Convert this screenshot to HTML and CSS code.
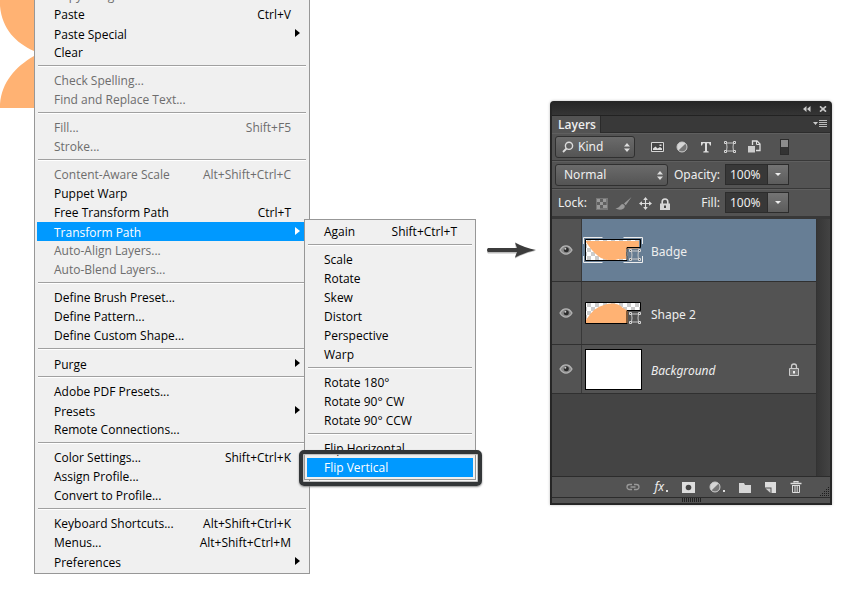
FILE: index.html
```
<!DOCTYPE html>
<html lang="en">
<head>
<meta charset="utf-8">
<title>Transform Path</title>
<link rel="stylesheet" href="styles.css">
</head>
<body>
<svg class="defs" width="0" height="0" aria-hidden="true">
  <defs>
    <pattern id="checks" width="8" height="8" patternUnits="userSpaceOnUse">
      <rect width="8" height="8" fill="#fff"/><path d="M0 0h4v4H0zM4 4h4v4H4z" fill="#ccc"/>
    </pattern>
    <symbol id="eye" viewBox="0 0 14 10">
      <path d="M1 5C3 1.6 5 .9 7 .9S11 1.600 13 5C11 8.400 9 9.100 7 9.100S3 8.400 1 5z" fill="#888" stroke="#b4b4b4" stroke-width="1.300"/>
      <circle cx="7.300" cy="4.700" r="2.500" fill="#2c2c2c"/><circle cx="6.300" cy="3.700" r="1" fill="#ccc"/>
    </symbol>
    <symbol id="vector" viewBox="0 0 12 12">
      <path d="M2 2h8M2 10h8M2.500 2Q3.500 6 2.500 10M9.500 2Q8.500 6 9.500 10" fill="none" stroke="#c8c8c8"/>
      <path d="M.5.5h2v2h-2zM9.500.5h2v2h-2zM.5 9.500h2v2h-2zM9.500 9.500h2v2h-2z" fill="#535353" stroke="#d6d6d6"/>
    </symbol>
    <symbol id="half" viewBox="0 0 12 12">
      <circle cx="6" cy="6" r="5" fill="#d6d6d6"/><path d="M9.600 2.400A5 5 0 0 1 2.400 9.600z" fill="#777"/><circle cx="6" cy="6" r="5" fill="none" stroke="#c8c8c8"/>
    </symbol>
    <symbol id="lock" viewBox="0 0 12 12">
      <path d="M3.200 6V3.800a2.800 2.800 0 0 1 5.600 0V6" fill="none" stroke="#ddd" stroke-width="1.600"/>
      <path d="M1 5.500h10V12H1z" fill="#d6d6d6"/><path d="M5 7.500h2V10H5z" fill="#444"/>
    </symbol>
  </defs>
</svg>
<main class="stage">
  <svg class="art" viewBox="0 0 34 108" aria-hidden="true">
    <path d="M0 0H34V51C16 43 2 29 0 6zM34 56V108H0V104C2 82 15 67 34 56z" fill="#ffb273"/>
  </svg>

  <div class="menu" role="menu" aria-label="Edit">
    <button class="item" disabled>Copy Merged</button>
    <button class="item">Paste <kbd>Ctrl+V</kbd></button>
    <button class="item more">Paste Special</button>
    <button class="item">Clear</button>
    <hr>
    <button class="item" disabled>Check Spelling...</button>
    <button class="item" disabled>Find and Replace Text...</button>
    <hr>
    <button class="item" disabled>Fill... <kbd>Shift+F5</kbd></button>
    <button class="item" disabled>Stroke...</button>
    <hr>
    <button class="item" disabled>Content-Aware Scale <kbd>Alt+Shift+Ctrl+C</kbd></button>
    <button class="item">Puppet Warp</button>
    <button class="item">Free Transform Path <kbd>Ctrl+T</kbd></button>
    <div class="parent">
      <button class="item more active">Transform Path</button>
      <div class="menu submenu" role="menu" aria-label="Transform Path">
        <button class="item">Again <kbd>Shift+Ctrl+T</kbd></button>
        <hr>
        <button class="item">Scale</button>
        <button class="item">Rotate</button>
        <button class="item">Skew</button>
        <button class="item">Distort</button>
        <button class="item">Perspective</button>
        <button class="item">Warp</button>
        <hr>
        <button class="item">Rotate 180°</button>
        <button class="item">Rotate 90° CW</button>
        <button class="item">Rotate 90° CCW</button>
        <hr>
        <button class="item">Flip Horizontal</button>
        <div class="parent">
          <button class="item active">Flip Vertical</button>
          <span class="frame"></span>
        </div>
      </div>
    </div>
    <button class="item" disabled>Auto-Align Layers...</button>
    <button class="item" disabled>Auto-Blend Layers...</button>
    <hr>
    <button class="item">Define Brush Preset...</button>
    <button class="item">Define Pattern...</button>
    <button class="item">Define Custom Shape...</button>
    <hr>
    <button class="item more">Purge</button>
    <hr>
    <button class="item">Adobe PDF Presets...</button>
    <button class="item more">Presets</button>
    <button class="item">Remote Connections...</button>
    <hr>
    <button class="item">Color Settings... <kbd>Shift+Ctrl+K</kbd></button>
    <button class="item">Assign Profile...</button>
    <button class="item">Convert to Profile...</button>
    <hr>
    <button class="item">Keyboard Shortcuts... <kbd>Alt+Shift+Ctrl+K</kbd></button>
    <button class="item">Menus... <kbd>Alt+Shift+Ctrl+M</kbd></button>
    <button class="item more">Preferences</button>
  </div>

  <div class="pointer">
    <svg width="52" height="20" viewBox="0 0 52 20" aria-hidden="true">
      <path d="M3 9H31L30 3.500Q40 9 50 11Q40 13 30 18.500L31 13.500H3Q1 11 3 9z" fill="#bbb"/>
      <path d="M3 8H32L30 2.500Q40 8 51 10Q40 12 30 17.500L32 12H3Q1 10 3 8z" fill="#3c3c3c"/>
    </svg>
  </div>

  <section class="panel" aria-label="Layers">
    <header class="titlebar">
      <svg width="8" height="6" viewBox="0 0 8 6"><path d="M3.500 0v6L0 3zM7.500 0v6L4 3z" fill="#ccc"/></svg>
      <svg width="8" height="6" viewBox="0 0 8 6"><path d="M1 .3L7 5.700M7 .3L1 5.700" stroke="#c8c8c8" stroke-width="1.600"/></svg>
    </header>
    <div class="tabs">
      <button class="tab">Layers</button>
      <svg width="15" height="8" viewBox="0 0 15 8"><path d="M0 2h5L2.500 5z" fill="#ccc"/><path d="M6 .5h8M6 2.500h8M6 4.500h8M6 6.500h8" stroke="#bbb"/></svg>
    </div>

    <div class="row">
      <div class="pick kind">
        <svg class="glass" width="12" height="12" viewBox="0 0 12 12"><circle cx="7" cy="4.800" r="3.600" fill="none" stroke="#ddd" stroke-width="1.400"/><path d="M4.500 7.500L1 11" stroke="#ddd" stroke-width="1.800"/></svg>
        <select aria-label="Filter type"><option>Kind</option></select>
        <svg class="updown" width="6" height="9" viewBox="0 0 6 9"><path d="M0 3.500L3 0L6 3.500zM0 5.500h6L3 9z" fill="#ddd"/></svg>
      </div>
      <div class="filters">
        <svg width="13" height="12" viewBox="0 0 13 12"><path d="M.5 1.500h12v9H.5z" fill="#444" stroke="#d6d6d6"/><path d="M2 9V7.500L4.500 5.500l2 2L9 6l2 1.500V9z" fill="#ddd"/><path d="M8.500 3.500h2V5h-2z" fill="#ddd"/></svg>
        <svg width="12" height="12"><use href="#half"/></svg>
        <svg width="12" height="12" viewBox="0 0 12 12"><path d="M1 1h10v3.500h-1L9 2.300H7V10l1.700.5v1H3.300v-1L5 10V2.300H3L2 4.500H1z" fill="#ddd"/></svg>
        <svg width="12" height="12"><use href="#vector"/></svg>
        <svg width="13" height="13" viewBox="0 0 13 13"><path d="M4.500 5V1h4.500l3 3v6.500H8" fill="none" stroke="#ddd" stroke-width="1.300"/><path d="M8.500 1v3.500H12" fill="none" stroke="#ddd"/><path d="M0 6h7v6.500H0z" fill="#ccc"/></svg>
      </div>
      <button class="switch" aria-label="Filtering on"></button>
    </div>

    <div class="row">
      <div class="pick blend">
        <select aria-label="Blend mode"><option>Normal</option></select>
        <svg class="updown" width="6" height="9" viewBox="0 0 6 9"><path d="M0 3.500L3 0L6 3.500zM0 5.500h6L3 9z" fill="#ddd"/></svg>
      </div>
      <div class="amount">
        <label for="opacity">Opacity:</label>
        <input id="opacity" value="100%"><button class="drop" aria-label="Opacity slider"></button>
      </div>
    </div>

    <div class="row">
      <span class="lock-label">Lock:</span>
      <div class="locks">
        <svg width="12" height="12" viewBox="0 0 12 12"><path d="M0 0h12v12H0z" fill="#777"/><path d="M1 1h3v3H1zM7 1h3v3H7zM4 4h3v3H4zM1 7h3v4H1zM7 7h4v3H7z" fill="#999"/><path d="M4 1h3v3H4zM1 4h3v3H1zM7 4h3v3H7zM4 7h3v3H4z" fill="#606060"/></svg>
        <svg width="17" height="13" viewBox="0 0 17 13"><path d="M16.500 0L9 6.500l1.800 1.700zM8 7C5 7 5.500 10.500.5 11.500C4 13.500 10 13 9.800 8.800z" fill="#999"/></svg>
        <svg width="13" height="13" viewBox="0 0 14 14"><path d="M7 2v10M2 7h10" stroke="#ddd" stroke-width="1.200"/><path d="M7 0l2.500 3.200H4.500zM7 14l2.500-3.200H4.500zM0 7l3.200-2.500v5zM14 7l-3.200-2.500v5z" fill="#ddd"/></svg>
        <svg width="12" height="12"><use href="#lock"/></svg>
      </div>
      <div class="amount">
        <label for="fill">Fill:</label>
        <input id="fill" value="100%"><button class="drop" aria-label="Fill slider"></button>
      </div>
    </div>

    <div class="list-area">
      <ul class="layers">
        <li class="layer selected">
          <button class="eye" aria-label="Hide Badge"><svg width="14" height="10"><use href="#eye"/></svg></button>
          <svg class="thumb" width="60" height="28" viewBox="0 0 60 28">
            <path d="M2 4h54v20H2z" fill="url(#checks)"/>
            <path d="M3 5H56V13H43V23H36Q27 26 18 22Q10 17 3 6z" fill="#ffb273"/>
            <path d="M2.500 3.500h55v8H44v13H2.500z" fill="none" stroke="#000"/>
            <path d="M.5 8V1.500h19M40.500 1.500h19V8M.5 20v6.500h19M40.500 26.500h19V20" fill="none" stroke="#eee"/>
            <path d="M45 12.500h13V25H45z" fill="#687d92"/>
            <use href="#vector" x="46" y="13" width="12" height="12"/>
          </svg>
          <span class="name">Badge</span>
        </li>
        <li class="layer">
          <button class="eye" aria-label="Hide Shape 2"><svg width="14" height="10"><use href="#eye"/></svg></button>
          <svg class="thumb" width="60" height="28" viewBox="0 0 60 28">
            <path d="M2 4h55v20H2z" fill="url(#checks)"/>
            <path d="M3 24V21Q11 8 21 6Q33 2 40 9L45 12V24z" fill="#ffb273"/>
            <path d="M45 12h14v15H45z" fill="#535353"/>
            <path d="M2.500 3.500h55v8H44v13H2.500z" fill="none" stroke="#000"/>
            <use href="#vector" x="46" y="13" width="12" height="12"/>
          </svg>
          <span class="name">Shape 2</span>
        </li>
        <li class="layer base">
          <button class="eye" aria-label="Hide Background"><svg width="14" height="10"><use href="#eye"/></svg></button>
          <span class="thumb blank"></span>
          <span class="name">Background</span>
          <svg class="locked" width="12" height="13" viewBox="0 0 12 13"><path d="M3.500 6V3.500a2.500 2.500 0 0 1 5 0V6" fill="none" stroke="#ccc" stroke-width="1.300"/><path d="M1.500 5.500h9v7h-9z" fill="#777" stroke="#ccc"/><path d="M5 8h2v2.500H5z" fill="#eee"/></svg>
        </li>
      </ul>
      <div class="scroll"></div>
    </div>

    <footer class="tools">
      <svg width="14" height="8" viewBox="0 0 14 8"><path d="M6 6.500H3.500a2.500 2.500 0 0 1 0-5H6M8 1.500h2.500a2.500 2.500 0 0 1 0 5H8M4.500 4h5" fill="none" stroke="#999" stroke-width="1.300"/></svg>
      <button class="fx">fx<i></i></button>
      <svg width="13" height="11" viewBox="0 0 13 11"><path d="M0 0h13v11H0z" fill="#ddd"/><circle cx="6.500" cy="5.500" r="2.800" fill="#444"/></svg>
      <button class="fx" aria-label="Adjustment layer"><svg width="12" height="12"><use href="#half"/></svg><i></i></button>
      <svg width="12" height="11" viewBox="0 0 12 11"><path d="M0 1h5l1 2h6v8H0z" fill="#d6d6d6"/></svg>
      <svg width="11" height="11" viewBox="0 0 11 11"><path d="M0 0h11v11H6.500V5.500H0z" fill="#ddd"/><path d="M.5 6.500H5.500V11z" fill="#ccc"/></svg>
      <svg width="12" height="12" viewBox="0 0 12 12"><path d="M4 1.500V.6h4v.9M.5 2.500h11" fill="none" stroke="#ddd" stroke-width="1.300"/><path d="M2 4.500h8M2.500 4.500V11.500h7V4.500M5 5v6M7.200 5v6" fill="none" stroke="#ddd"/></svg>
      <svg class="corner" width="10" height="10" viewBox="0 0 10 10"><path d="M8 0h1v1H8zM6 2h1v1H6zM8 2h1v1H8zM4 4h1v1H4zM6 4h1v1H6zM8 4h1v1H8zM2 6h1v1H2zM4 6h1v1H4zM6 6h1v1H6zM8 6h1v1H8zM0 8h1v1H0zM2 8h1v1H2zM4 8h1v1H4zM6 8h1v1H6zM8 8h1v1H8z" fill="#1c1c1c"/></svg>
    </footer>
    <div class="grip"><span></span></div>
  </section>
</main>
</body>
</html>
```

FILE: styles.css
```
* { box-sizing: border-box; }
html, body { margin: 0; background: #fff; }
body { font-family: "Open Sans", sans-serif; font-size: 12px; overflow: hidden; }
button, input, select { font: inherit; color: inherit; margin: 0; padding: 0; border: 0; background: none; border-radius: 0; }
svg { display: block; flex: none; }
.defs { position: absolute; }

.stage { display: flex; align-items: flex-start; padding-right: 18px; }
.art { width: 34px; }

/* menus */
.menu { flex: none; width: 276px; margin-top: -17px; padding: 2px; background: #f0f0f0; border: 1px solid #979797; color: #000; }
.item { display: flex; justify-content: space-between; align-items: center; width: 100%; height: 19px; padding: 0 16px 0 17px; line-height: 18px; text-align: left; white-space: nowrap; }
.item:disabled { color: #6d6d6d; }
.item kbd { font: inherit; }
.item.more { padding-right: 7px; padding-top: 2px; }
.item.more::after { content: ""; border: 4px solid transparent; border-left: 5px solid #000; border-right: 0; margin-bottom: 4px; }
.item.active { background: #0099ff; color: #fff; }
.item.active::after { border-left-color: #fff; }
.menu hr { height: 2px; margin: 3px 1px 4px; border: 0; border-top: 1px solid #a0a0a0; background: #fff; }
.parent { position: relative; }
.submenu { position: absolute; z-index: 1; top: -3px; left: calc(100% - 3px); width: 172px; margin: 0; }
.frame { position: absolute; inset: -8px -9px -9px -8px; border: 4px solid #333638; border-radius: 5px; box-shadow: 0 1px 2px #888, inset 0 0 1px 1px #bbb; pointer-events: none; }

.pointer { flex: none; width: 240px; padding: 240px 13px 0 0; display: flex; justify-content: flex-end; }

/* layers panel */
.panel { flex: 1; margin-top: 101px; border: 1px solid #262626; border-width: 1px 2px 2px; border-radius: 4px 4px 0 0; background: #535353; color: #eee; font-family: "Noto Sans", sans-serif; box-shadow: 0 0 3px #bbb; }
.titlebar { display: flex; justify-content: flex-end; align-items: center; gap: 8px; height: 13px; padding-right: 3px; background: linear-gradient(#262626, #353535); }
.tabs { display: flex; justify-content: space-between; align-items: center; height: 18px; padding-right: 2px; border-top: 1px solid #222; border-bottom: 1px solid #2c2c2c; background: #393939; }
.tab { align-self: stretch; width: 49px; margin-bottom: -1px; padding-left: 2px; background: #535353; border-right: 1px solid #2a2a2a; font-family: "Open Sans", sans-serif; font-weight: 600; }
.row { display: flex; align-items: center; height: 28px; padding: 0 41px 1px 3px; border-top: 1px solid #5f5f5f; border-bottom: 1px solid #383838; }
.pick { position: relative; height: 22px; border: 1px solid #303030; border-radius: 3px; background: linear-gradient(#6b6b6b, #545454); }
.pick select { appearance: none; width: 100%; height: 20px; padding-left: 8px; }
.kind { width: 80px; }
.kind select { padding-left: 22px; }
.blend { width: 113px; }
.glass { position: absolute; left: 6px; top: 4px; }
.updown { position: absolute; right: 4px; top: 6px; pointer-events: none; }
.filters { display: flex; align-items: center; gap: 12px; margin: 0 auto 0 16px; }
.switch { width: 9px; height: 16px; border: 1px solid #2c2c2c; background: linear-gradient(#8c8c8c 50%, #333 50%); }
.amount { display: flex; align-items: center; margin-left: auto; }
.amount label { margin-right: 5px; }
.amount input { width: 43px; height: 21px; padding-left: 4px; background: #383838; border: 1px solid #2c2c2c; }
.drop { display: grid; place-items: center; width: 21px; height: 21px; border: 1px solid #2c2c2c; border-left: 0; background: linear-gradient(#747474, #5c5c5c); }
.drop::after { content: ""; border: 3px solid transparent; border-top-color: #eee; border-bottom: 0; }
.lock-label { margin-left: 3px; }
.locks { display: flex; align-items: center; gap: 7px; margin-left: 9px; padding-top: 2px; }

.list-area { display: flex; height: 259px; border-top: 2px solid #383838; }
.layers { flex: 1; margin: 0; padding: 0; list-style: none; background: #444; border-right: 1px solid #333; }
.layer { display: flex; align-items: center; height: 63px; background: #535353; border-bottom: 1px solid #303030; }
.layer.base { height: 49px; }
.eye { display: grid; place-items: center; width: 30px; padding-right: 1px; align-self: stretch; background: #535353; border-right: 1px solid #383838; }
.selected { background: #677e95; }
.thumb { margin: 0 8px 0 1px; }
.blank { width: 57px; height: 41px; margin: 0 9px 0 3px; background: #fff; border: 1px solid #000; }
.name { padding-top: 2px; }
.base .name { font-style: italic; }
.locked { margin-left: auto; margin-right: 16px; }
.scroll { width: 13px; background: linear-gradient(90deg, #363636, #434343); }

.tools { display: flex; align-items: center; justify-content: flex-end; gap: 14px; height: 22px; background: #535353; border-top: 1px solid #2c2c2c; border-bottom: 1px solid #2c2c2c; }
.fx { display: flex; align-items: center; font-style: italic; line-height: 18px; }
.fx i { width: 2px; height: 2px; margin: 8px 0 0 2px; background: #ddd; }
.corner { align-self: flex-end; margin-left: 4px; }
.grip { display: grid; justify-items: center; height: 5px; }
.grip span { width: 19px; height: 4px; background: repeating-linear-gradient(90deg, #222 0 1px, #535353 1px 2px); }
```
